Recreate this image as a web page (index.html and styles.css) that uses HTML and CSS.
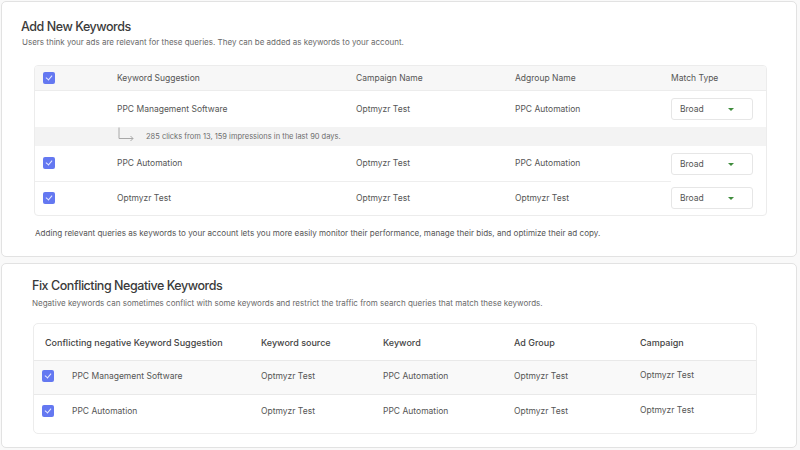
FILE: index.html
```html
<!DOCTYPE html>
<html lang="en">
<head>
    <meta charset="UTF-8">
    <meta name="viewport" content="width=device-width, initial-scale=1.0">
    <title>Keywords</title>
    <link rel="stylesheet" href="styles.css">
</head>
<body>

<div class="card card-add">
    <h2 class="card-title">Add New Keywords</h2>
    <p class="card-sub">Users think your ads are relevant for these queries. They can be added as keywords to your account.</p>

    <div class="kw-table">
        <div class="kw-row kw-head">
            <div class="cell"><span class="check"></span></div>
            <div class="cell">Keyword Suggestion</div>
            <div class="cell">Campaign Name</div>
            <div class="cell">Adgroup Name</div>
            <div class="cell">Match Type</div>
        </div>
        <div class="kw-row kw-first">
            <div class="cell"></div>
            <div class="cell">PPC Management Software</div>
            <div class="cell">Optmyzr Test</div>
            <div class="cell">PPC Automation</div>
            <div class="cell"><div class="select">Broad <span class="caret"></span></div></div>
        </div>
        <div class="kw-note">
            <svg class="note-arrow" width="18" height="14" viewBox="0 0 18 14">
                <path d="M1 0.5 V11.5 H15 M12.5 9 L15 11.5 L12.5 14" fill="none" stroke="#a8a8a8" stroke-width="1"/>
            </svg>
            285 clicks from 13, 159 impressions in the last 90 days.
        </div>
        <div class="kw-row kw-line">
            <div class="cell"><span class="check"></span></div>
            <div class="cell">PPC Automation</div>
            <div class="cell">Optmyzr Test</div>
            <div class="cell">PPC Automation</div>
            <div class="cell"><div class="select">Broad <span class="caret"></span></div></div>
        </div>
        <div class="kw-row kw-last">
            <div class="cell"><span class="check"></span></div>
            <div class="cell">Optmyzr Test</div>
            <div class="cell">Optmyzr Test</div>
            <div class="cell">Optmyzr Test</div>
            <div class="cell"><div class="select">Broad <span class="caret"></span></div></div>
        </div>
    </div>

    <p class="card-foot">Adding relevant queries as keywords to your account lets you more easily monitor their performance, manage their bids, and optimize their ad copy.</p>
</div>

<div class="card card-neg">
    <h2 class="card-title">Fix Conflicting Negative Keywords</h2>
    <p class="card-sub">Negative keywords can sometimes conflict with some keywords and restrict the traffic from search queries that match these keywords.</p>

    <div class="neg-table">
        <div class="neg-row neg-head">
            <div class="cell name">Conflicting negative Keyword Suggestion</div>
            <div class="cell">Keyword source</div>
            <div class="cell">Keyword</div>
            <div class="cell">Ad Group</div>
            <div class="cell">Campaign</div>
        </div>
        <div class="neg-row neg-shade">
            <div class="cell name"><span class="check"></span>PPC Management Software</div>
            <div class="cell">Optmyzr Test</div>
            <div class="cell">PPC Automation</div>
            <div class="cell">Optmyzr Test</div>
            <div class="cell up">Optmyzr Test</div>
        </div>
        <div class="neg-row neg-last">
            <div class="cell name"><span class="check"></span>PPC Automation</div>
            <div class="cell">Optmyzr Test</div>
            <div class="cell">PPC Automation</div>
            <div class="cell">Optmyzr Test</div>
            <div class="cell up">Optmyzr Test</div>
        </div>
    </div>
</div>

</body>
</html>
```

FILE: styles.css
```css
body {
    margin: 0;
    padding: 1px;
    background-color: #f9f9f9;
    font-family: Inter, "Noto Sans", sans-serif;
    color: #555;
}
.card {
    background-color: white;
    border: 1px solid #e2e2e2;
    border-radius: 5px;
    width: 794px;
}
.card-add {
    height: 254px;
}
.card-neg {
    margin-top: 6px;
    height: 183px;
}
.card-title {
    margin: 0;
    font-size: 12.5px;
    line-height: 15px;
    font-weight: 500;
    letter-spacing: -0.45px;
    color: #3a3a3a;
}
.card-sub {
    margin: 0;
    font-size: 8px;
    line-height: 11px;
    color: #6a6a6a;
}
.card-add .card-title {
    padding: 17px 0 0 19px;
}
.card-add .card-sub {
    padding: 3px 0 0 20px;
}
.card-neg .card-title {
    padding: 14px 0 0 30px;
}
.card-neg .card-sub {
    padding: 5px 0 0 30px;
}

/* checkbox */
.check {
    display: inline-block;
    width: 12px;
    height: 12px;
    border-radius: 2px;
    background-color: #6478f1;
    position: relative;
    flex-shrink: 0;
}
.check::after {
    content: "";
    position: absolute;
    left: 4px;
    top: 2px;
    width: 3px;
    height: 5px;
    border: solid #e8ebff;
    border-width: 0 1px 1px 0;
    transform: rotate(40deg);
}

/* add keywords table */
.kw-table {
    margin: 17px 0 0 32px;
    width: 731px;
    border: 1px solid #ececec;
    border-radius: 4px;
    font-size: 8.5px;
    overflow: hidden;
}
.kw-row {
    display: grid;
    grid-template-columns: 82px 239px 159px 156px 1fr;
    align-items: center;
    box-sizing: border-box;
}
.kw-row .cell {
    display: flex;
    align-items: center;
}
.kw-row .cell:first-child {
    padding-left: 8px;
}
.kw-head {
    height: 25px;
    background-color: #f7f7f7;
    border-bottom: 1px solid #ececec;
}
.kw-first {
    height: 36px;
}
.kw-line {
    height: 35px;
}
.kw-line .cell {
    height: 100%;
    border-bottom: 1px solid #eeeeee;
}
.kw-line .cell:last-child {
    border-bottom: none;
}
.kw-last {
    height: 34px;
}
.kw-note {
    height: 19px;
    background-color: #f3f3f3;
    display: flex;
    align-items: center;
    padding-left: 83px;
    font-size: 7.5px;
    color: #6d6d6d;
}
.note-arrow {
    margin: -5px 10px 0 0;
}
.select {
    width: 82px;
    height: 22px;
    border: 1px solid #e6e6e6;
    border-radius: 3px;
    display: flex;
    align-items: center;
    padding-left: 8px;
    box-sizing: border-box;
    position: relative;
}
.caret {
    position: absolute;
    left: 56px;
    top: 9px;
    width: 0;
    height: 0;
    border-left: 3px solid transparent;
    border-right: 3px solid transparent;
    border-top: 3px solid #3f8c3c;
}
.card-foot {
    margin: 12px 0 0 33px;
    font-size: 8.1px;
    line-height: 11px;
    color: #555;
}

/* negative keywords table */
.neg-table {
    margin: 14px 0 0 31px;
    width: 722px;
    border: 1px solid #ececec;
    border-radius: 5px;
    font-size: 8.5px;
    overflow: hidden;
}
.neg-row {
    display: grid;
    grid-template-columns: 227px 122px 131px 126px 1fr;
    align-items: center;
    height: 34px;
    box-sizing: border-box;
    border-top: 1px solid #e9e9e9;
}
.neg-row .cell.name {
    display: flex;
    align-items: center;
    padding-left: 8px;
}
.neg-row .check {
    margin-right: 18px;
}
.neg-head {
    height: 36px;
    border-top: none;
    font-size: 9px;
    font-weight: 500;
    color: #444;
}
.neg-head .cell.name {
    padding-left: 11px;
}
.neg-shade {
    background-color: #f9f9f9;
    padding-bottom: 3px;
}
.neg-last {
    height: 39px;
    padding-bottom: 6px;
}
.cell.up {
    margin-top: -3px;
}
```
